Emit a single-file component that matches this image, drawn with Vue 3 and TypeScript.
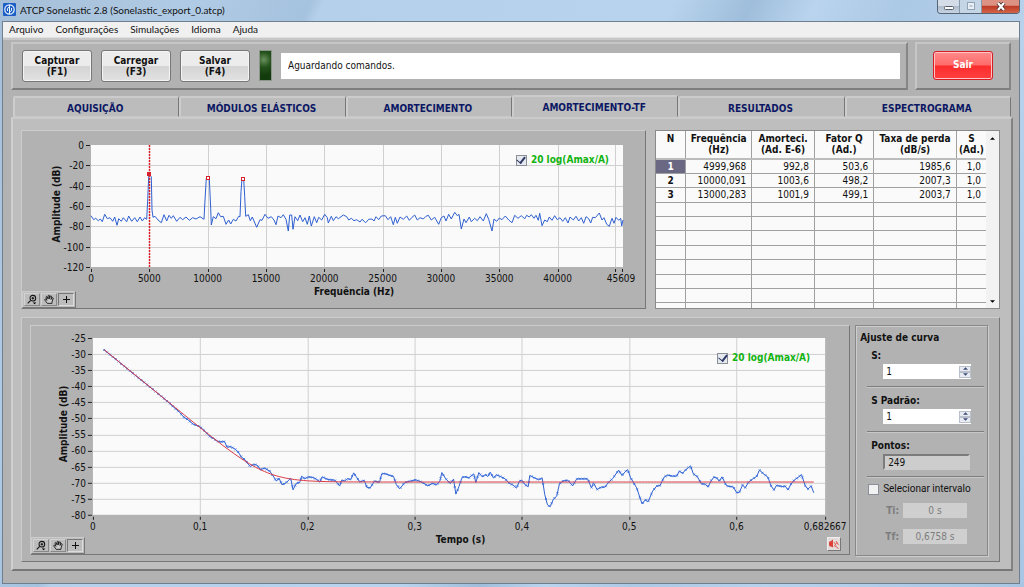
<script setup lang="ts">
import { ref } from 'vue'

interface Tick { pos: number; label: string }

const menus = ['Arquivo', 'Configurações', 'Simulações', 'Idioma', 'Ajuda']
const tabs = ['AQUISIÇÃO', 'MÓDULOS ELÁSTICOS', 'AMORTECIMENTO', 'AMORTECIMENTO-TF', 'RESULTADOS', 'ESPECTROGRAMA']
const activeTab = ref(3)
const actions = [
  { name: 'Capturar', key: '(F1)' },
  { name: 'Carregar', key: '(F3)' },
  { name: 'Salvar', key: '(F4)' },
]

const columns = [
  { id: 'n', top: 'N', sub: '' },
  { id: 'freq', top: 'Frequência', sub: '(Hz)' },
  { id: 'damp', top: 'Amorteci.', sub: '(Ad. E-6)' },
  { id: 'q', top: 'Fator Q', sub: '(Ad.)' },
  { id: 'loss', top: 'Taxa de perda', sub: '(dB/s)' },
  { id: 's', top: 'S', sub: '(Ad.)' },
]
const rows = [
  ['1', '4999,968', '992,8', '503,6', '1985,6', '1,0'],
  ['2', '10000,091', '1003,6', '498,2', '2007,3', '1,0'],
  ['3', '13000,283', '1001,9', '499,1', '2003,7', '1,0'],
]
const emptyRows = 8

const logFreq = ref(true)
const logTime = ref(true)
const sValue = ref('1')
const sDefault = ref('1')
const useInterval = ref(false)

function step(target: 's' | 'd', by: number) {
  const model = target === 's' ? sValue : sDefault
  model.value = String(Math.max(0, Number(model.value) + by))
}

function parse(text: string): [number, number][] {
  return text.trim().split(/\s+/).map((p) => p.split(',').map(Number) as [number, number])
}

function toPath(points: [number, number][]): string {
  return 'M' + points.map(([x, y]) => `${x.toFixed(1)} ${y.toFixed(1)}`).join('L')
}

/* Spectrum plot */
const F = { left: 69, top: 14, width: 532, height: 122, max: 45609 }
const fx = (hz: number) => F.left + (hz / F.max) * F.width
const fy = (db: number) => F.top + (-db / 120) * F.height
const fTicksX: Tick[] = [0, 5000, 10000, 15000, 20000, 25000, 30000, 35000, 40000].map((v) => ({ pos: fx(v), label: String(v) }))
const fTicksY: Tick[] = [0, -20, -40, -60, -80, -100, -120].map((v) => ({ pos: fy(v), label: String(v) }))
const peaks = [{ hz: 5000, db: -29 }, { hz: 10000, db: -32 }, { hz: 13000, db: -33 }]

/* Trace samples are stored in thirds of a plot unit */
const spectrum = parse(`
0,212 8,224 14,220 22,227 28,222 34,230 41,208 49,221 57,218 65,229 71,216 78,241 83,221 91,229 97,218 107,230
113,213 122,229 131,218 139,230 147,216 154,228 161,218 167,223 170,165 173,95 176,90 181,95 183,195 186,217
192,214 201,225 211,233 219,209 227,228 234,211 241,220 247,212 257,229 267,217 275,224 285,216 295,226 305,218
315,222 327,215 339,223 342,165 346,100 350,96 355,100 359,190 361,240 367,215 375,221 382,203 389,215 397,214
405,238 413,225 419,237 427,223 435,228 443,214 447,215 450,140 453,101 458,101 461,155 464,214 472,209 478,227
484,216 497,247 507,224 513,226 522,208 531,220 541,215 549,225 555,239 561,213 570,218 577,209 585,223 592,258
596,210 602,210 606,253 612,215 620,227 627,210 635,230 642,218 649,238 655,213 661,243 670,215 677,233 683,217
692,225 701,208 709,218 712,234 721,214 727,227 735,215 742,221 757,210 767,215 773,225 781,220 789,227 797,224
807,231 813,223 824,233 833,223 843,222 849,228 855,215 863,224 871,213 883,212 891,224 899,215 907,239 913,217
919,235 927,216 937,223 947,213 955,226 963,217 971,210 979,225 987,218 997,222 1005,214 1012,211 1021,225
1031,217 1043,238 1051,218 1059,213 1065,228 1073,208 1081,222 1091,202 1099,212 1104,208 1111,252 1119,222
1125,233 1135,216 1141,230 1151,220 1159,227 1167,215 1177,228 1186,206 1193,223 1203,258 1209,222 1217,229
1225,219 1233,224 1243,213 1253,225 1263,233 1271,211 1281,220 1291,212 1301,221 1307,211 1315,216 1321,209
1329,220 1335,211 1342,226 1346,205 1353,242 1361,225 1369,230 1375,216 1383,226 1391,212 1399,224 1407,218
1415,229 1423,218 1431,234 1437,216 1447,225 1455,214 1463,228 1471,218 1478,235 1485,215 1493,221 1499,234
1505,217 1513,218 1525,204 1533,225 1539,218 1547,238 1555,244 1563,220 1569,235 1575,217 1583,226 1589,220
1592,243 1596,225`)
const spectrumPath = toPath(spectrum.map(([x, y]) => [F.left + x / 3, F.top + y / 3]))

/* Decay plot */
const T = { left: 62, top: 12, width: 733, height: 177, max: 0.682667 }
const tx = (s: number) => T.left + (s / T.max) * T.width
const ty = (db: number) => T.top + ((-25 - db) / 55) * T.height
const tTicksX: Tick[] = [0, 0.1, 0.2, 0.3, 0.4, 0.5, 0.6, 0.682667].map((v) => ({ pos: tx(v), label: String(v).replace('.', ',') }))
const tTicksY: Tick[] = Array.from({ length: 12 }, (_, i) => ({ pos: ty(-25 - i * 5), label: String(-25 - i * 5) }))

const decay = parse(`
34,36 60,57 92,83 121,107 151,131 181,155 221,188 241,206 261,224 273,238 286,246 301,259 321,266 336,280 353,298
363,302 373,310 383,312 395,311 403,328 413,326 426,333 436,342 446,358 458,367 466,379 473,386 483,379 493,382
503,395 516,391 531,400 541,414 551,430 559,421 568,441 581,434 594,421 601,456 611,436 621,434 627,415 636,423
646,417 661,419 673,425 681,433 688,417 706,425 726,427 736,438 741,445 747,427 756,429 766,422 774,426 783,405
793,420 801,432 815,428 823,449 833,450 845,430 861,433 867,408 877,407 889,412 903,416 911,440 921,453 937,434
953,430 969,426 986,432 1006,444 1021,436 1031,442 1042,430 1048,404 1059,422 1073,437 1083,424 1090,469 1099,447
1109,418 1119,417 1129,420 1144,408 1150,434 1159,404 1169,417 1179,410 1186,416 1193,403 1203,421 1211,411
1226,417 1238,423 1251,437 1261,441 1272,451 1281,430 1288,427 1296,439 1307,447 1312,413 1326,420 1339,426
1349,420 1357,470 1365,501 1373,507 1383,484 1393,475 1401,438 1411,430 1426,427 1441,444 1453,423 1486,423
1497,450 1503,435 1514,455 1526,448 1538,448 1549,433 1561,422 1579,397 1589,413 1598,402 1606,395 1615,420
1633,450 1649,498 1659,486 1667,492 1681,460 1693,445 1703,443 1715,418 1726,412 1741,415 1753,415 1761,400
1771,406 1781,395 1795,384 1803,408 1815,416 1827,438 1839,439 1847,448 1857,428 1865,418 1873,420 1881,430
1889,417 1903,444 1913,446 1923,447 1933,464 1941,464 1951,442 1959,450 1969,433 1981,424 1993,416 2002,397
2013,407 2027,418 2037,445 2045,456 2053,443 2071,446 2079,445 2087,456 2097,438 2107,426 2119,418 2128,410
2139,443 2147,454 2157,445 2165,465`).map(([x, y]) => [T.left + x / 3, T.top + y / 3] as [number, number])
const decayPath = toPath(decay)

function sampleAt(x: number): number {
  const i = Math.max(1, decay.findIndex((p) => p[0] >= x))
  const [ax, ay] = decay[i - 1]
  const [bx, by] = decay[i]
  return ay + ((x - ax) / (bx - ax)) * (by - ay)
}
const first = decay[0][0]
const last = decay[decay.length - 1][0]
const marks = Array.from({ length: 249 }, (_, i) => {
  const x = first + ((last - first) * i) / 249
  return `M${(x - 1).toFixed(1)} ${(sampleAt(x) - 1).toFixed(1)}l2 2m0 -2l-2 2`
}).join('')

const fitPath = toPath(Array.from({ length: 240 }, (_, i) => {
  const s = 0.0106 + (0.6614 * i) / 239
  const db = 10 * Math.log10(10 ** (-(25.8 + 272 * s) / 10) + 10 ** -6.98)
  return [tx(s), ty(db)] as [number, number]
}))
</script>

<template>
  <div class="window">
    <header class="titlebar">
      <svg class="app-icon" viewBox="0 0 13 13" aria-hidden="true">
        <rect width="13" height="13" rx="1" fill="#1d5fc4" />
        <circle cx="6.5" cy="6.5" r="4.7" fill="none" stroke="#e8f3ff" stroke-width="1.2" />
        <path d="M6.500 2v9M4.500 8V5.500q0-1 2-1M8.500 5v2.500q0 1-2 1" fill="none" stroke="#e8f3ff" />
      </svg>
      <h1>ATCP Sonelastic 2.8 (Sonelastic_export_0.atcp)</h1>
      <div class="caption">
        <button type="button" aria-label="Minimizar"><svg viewBox="0 0 12 9"><rect x="1.500" y="4.500" width="9" height="3" rx="1" fill="#fff" stroke="#555e6b" /></svg></button>
        <button type="button" aria-label="Maximizar" disabled><svg viewBox="0 0 12 9"><rect x="2.500" y=".5" width="7" height="7" fill="#e8eff6" stroke="#94a3b4" /><path d="M4.500 4h3" stroke="#94a3b4" /></svg></button>
        <button type="button" class="close" aria-label="Fechar"><svg viewBox="0 0 12 9"><path d="M3 1l6 7M9 1L3 8" stroke="#4c3334" stroke-width="4" /><path d="M3 1l6 7M9 1L3 8" stroke="#fff" stroke-width="2.200" /></svg></button>
      </div>
    </header>

    <div class="client">
      <nav class="menubar">
        <button v-for="m in menus" :key="m" type="button">{{ m }}</button>
      </nav>

      <div class="toolbar">
        <section class="raised commands">
          <button v-for="a in actions" :key="a.name" type="button" class="action">{{ a.name }}<br />{{ a.key }}</button>
          <span class="led"></span>
          <input class="status" type="text" readonly value="Aguardando comandos." aria-label="Estado" />
        </section>
        <section class="raised exit">
          <button type="button">Sair</button>
        </section>
      </div>

      <nav class="tabs">
        <button v-for="(t, i) in tabs" :key="t" type="button" :class="{ active: i === activeTab }" @click="activeTab = i">{{ t }}</button>
      </nav>

      <main class="page">
        <div class="upper">
          <section class="raised graph spectrum">
            <svg class="plot" viewBox="0 0 623 177" role="img" aria-label="Espectro">
              <rect class="area" :x="F.left" :y="F.top" :width="F.width" :height="F.height" />
              <g class="grid">
                <path v-for="t in fTicksX.slice(1)" :key="t.label" :d="`M${Math.round(t.pos) + 0.5} ${F.top}v${F.height}`" />
                <path :d="`M${Math.round(fx(45000)) - 0.5} ${F.top}v${F.height}`" />
                <path v-for="t in fTicksY.slice(1, 6)" :key="t.label" :d="`M${F.left} ${Math.round(t.pos) + 0.5}h${F.width}`" />
              </g>
              <g class="ticks">
                <path v-for="t in fTicksX" :key="t.label" :d="`M${Math.round(t.pos) + 0.5} ${F.top + F.height + 2}v3`" />
                <path :d="`M${Math.round(fx(45000)) - 0.5} ${F.top + F.height + 2}v3M${F.left + F.width - 0.5} ${F.top + F.height + 2}v3`" />
                <path v-for="t in fTicksY" :key="t.label" :d="`M${F.left - 5} ${Math.round(t.pos) + 0.5}h4`" />
              </g>
              <text v-for="t in fTicksX" :key="t.label" class="mid" :x="t.pos" y="151">{{ t.label }}</text>
              <text class="mid" x="599" y="151">45609</text>
              <text v-for="t in fTicksY" :key="t.label" class="end" x="62" :y="t.pos + 4">{{ t.label }}</text>
              <text class="mid name" x="332" y="164">Frequência (Hz)</text>
              <text class="mid name" transform="translate(38 73) rotate(-90)">Amplitude (dB)</text>
              <path class="trace" :d="spectrumPath" />
              <path class="cursor" :d="`M${Math.round(fx(5000)) + 0.5} ${F.top}v${F.height}`" />
              <rect v-for="(p, i) in peaks" :key="p.hz" :class="['peak', { solid: i === 0 }]" :x="Math.round(fx(p.hz)) - 1.5" :y="Math.round(fy(p.db)) - 1.5" width="3" height="3" />
            </svg>
            <label class="legend"><input v-model="logFreq" type="checkbox" />20 log(Amax/A)</label>
            <div class="palette">
              <button type="button" aria-label="Zoom"><svg viewBox="0 0 14 12"><circle cx="8" cy="4.500" r="3.300" fill="none" stroke="#111" stroke-width="1.200" /><path d="M6.500 4.500h3M8 3v3M5.500 7L2 10.500" stroke="#111" stroke-width="1.300" /><path d="M8 9.500h4l-2 2z" /></svg></button>
              <button type="button" aria-label="Mover"><svg viewBox="0 0 14 12"><path d="M5 10.500L2 6.500q0-1 1-1l1.500 1.500L3.500 3q.8-1 1.500 0l1 2.500V1.500q.8-1 1.600 0V5l.9-3q1-.8 1.500.2L9.400 6l1.300-2q1-.4 1.300.4L10.500 9v1.500z" fill="#ccc" stroke="#111" /></svg></button>
              <button type="button" class="pressed" aria-label="Cursor"><svg viewBox="0 0 12 11"><path d="M6.500 2v7M3 5.500h7" stroke="#111" /></svg></button>
            </div>
          </section>

          <section class="results">
            <table>
              <colgroup><col v-for="c in columns" :key="c.id" :class="'col-' + c.id" /></colgroup>
              <thead>
                <tr><th v-for="c in columns" :key="c.id" scope="col">{{ c.top }}<br />{{ c.sub }}</th></tr>
              </thead>
              <tbody>
                <tr v-for="(r, i) in rows" :key="r[0]" :class="{ selected: i === 0 }">
                  <td v-for="(cell, j) in r" :key="j">{{ cell }}</td>
                </tr>
                <tr v-for="n in emptyRows" :key="'e' + n" :class="{ cut: n === emptyRows }">
                  <td v-for="c in columns" :key="c.id"></td>
                </tr>
              </tbody>
            </table>
            <div class="scroll">
              <button type="button" aria-label="Subir"><svg viewBox="0 0 6 3"><path d="M0 3l3-3 3 3z" /></svg></button>
              <button type="button" aria-label="Descer"><svg viewBox="0 0 6 3"><path d="M0 0l3 3 3-3z" /></svg></button>
            </div>
          </section>
        </div>

        <div class="raised lower">
          <section class="raised graph decay">
            <svg class="plot" viewBox="0 0 819 228" role="img" aria-label="Decaimento">
              <rect class="area" :x="T.left" :y="T.top" :width="T.width" :height="T.height" />
              <g class="grid">
                <path v-for="t in tTicksX.slice(1, 7)" :key="t.label" :d="`M${Math.round(t.pos) + 0.5} ${T.top}v${T.height}`" />
                <path v-for="t in tTicksY.slice(1, 11)" :key="t.label" :d="`M${T.left} ${Math.round(t.pos) + 0.5}h${T.width}`" />
              </g>
              <g class="ticks">
                <path v-for="t in tTicksX" :key="t.label" :d="`M${Math.round(t.pos) + 0.5} ${T.top + T.height + 2}v3`" />
                <path v-for="t in tTicksY" :key="t.label" :d="`M${T.left - 5} ${Math.round(t.pos) + 0.5}h4`" />
              </g>
              <text v-for="t in tTicksX" :key="t.label" class="mid" :x="t.pos" y="204">{{ t.label }}</text>
              <text v-for="t in tTicksY" :key="t.label" class="end" x="55" :y="t.pos + 4">{{ t.label }}</text>
              <text class="mid name" x="430" y="217">Tempo (s)</text>
              <text class="mid name" transform="translate(36 98) rotate(-90)">Amplitude (dB)</text>
              <path class="trace" :d="decayPath" />
              <path class="marks" :d="marks" />
              <path class="fit" :d="fitPath" />
            </svg>
            <label class="legend"><input v-model="logTime" type="checkbox" />20 log(Amax/A)</label>
            <div class="palette">
              <button type="button" aria-label="Zoom"><svg viewBox="0 0 14 12"><circle cx="8" cy="4.500" r="3.300" fill="none" stroke="#111" stroke-width="1.200" /><path d="M6.500 4.500h3M8 3v3M5.500 7L2 10.500" stroke="#111" stroke-width="1.300" /><path d="M8 9.500h4l-2 2z" /></svg></button>
              <button type="button" aria-label="Mover"><svg viewBox="0 0 14 12"><path d="M5 10.500L2 6.500q0-1 1-1l1.500 1.500L3.500 3q.8-1 1.500 0l1 2.500V1.500q.8-1 1.600 0V5l.9-3q1-.8 1.500.2L9.400 6l1.300-2q1-.4 1.300.4L10.500 9v1.500z" fill="#ccc" stroke="#111" /></svg></button>
              <button type="button" class="pressed" aria-label="Cursor"><svg viewBox="0 0 12 11"><path d="M6.500 2v7M3 5.500h7" stroke="#111" /></svg></button>
            </div>
            <button type="button" class="sound" aria-label="Reproduzir">
              <svg viewBox="0 0 12 12"><path d="M1 5q0-2 2-2l2-1.500v8L3 8.500Q1 8.500 1 7z" fill="#dd4038" /><path d="M6 4l2 3.500M8 3l2.500 4M7 8l3.500 2.500M6 8.500l3-4" fill="none" stroke="#e2605a" /></svg>
            </button>
          </section>

          <section class="fit-panel">
            <h2>Ajuste de curva</h2>
            <div class="block">
              <label for="s-value">S:</label>
              <div class="spin">
                <input id="s-value" v-model="sValue" type="text" />
                <span class="arrows">
                  <button type="button" aria-label="Aumentar S" @click="step('s', 1)"><svg viewBox="0 0 6 3"><path d="M0 3l3-3 3 3z" /></svg></button>
                  <button type="button" aria-label="Diminuir S" @click="step('s', -1)"><svg viewBox="0 0 6 3"><path d="M0 0l3 3 3-3z" /></svg></button>
                </span>
              </div>
            </div>
            <div class="block">
              <label for="s-default">S Padrão:</label>
              <div class="spin">
                <input id="s-default" v-model="sDefault" type="text" />
                <span class="arrows">
                  <button type="button" aria-label="Aumentar S Padrão" @click="step('d', 1)"><svg viewBox="0 0 6 3"><path d="M0 3l3-3 3 3z" /></svg></button>
                  <button type="button" aria-label="Diminuir S Padrão" @click="step('d', -1)"><svg viewBox="0 0 6 3"><path d="M0 0l3 3 3-3z" /></svg></button>
                </span>
              </div>
            </div>
            <div class="block">
              <label for="points">Pontos:</label>
              <input id="points" class="points" type="text" readonly value="249" />
            </div>
            <label class="check"><input v-model="useInterval" type="checkbox" />Selecionar intervalo</label>
            <div class="limit"><label for="ti">Ti:</label><input id="ti" type="text" value="0 s" :disabled="!useInterval" /></div>
            <div class="limit"><label for="tf">Tf:</label><input id="tf" type="text" value="0,6758 s" :disabled="!useInterval" /></div>
          </section>
        </div>
      </main>
    </div>
  </div>
</template>

<style>
body {
  background: #b5cfea;
}
</style>

<style scoped>
.window {
  box-sizing: border-box;
  min-height: 100vh;
  padding: 0 4px 3px 2px;
  display: flex;
  flex-direction: column;
  font: 10px/12px "DejaVu Sans Condensed", "Noto Sans", sans-serif;
  color: #111;
  background: linear-gradient(115deg, #a6bfd8 0, #b0cbe5 15%, #a5c2de 24%, #b5d0ea 25%, #b8d3ed 52%, #9fbedb 58%, #bad4ee 63%, #abc8e4 70%, #b8d2ec 80%, #a8c6e3 100%);
}
.window * {
  box-sizing: border-box;
}
button,
input {
  font: inherit;
  color: inherit;
  margin: 0;
  padding: 0;
  border: 0;
  border-radius: 0;
}
svg {
  display: block;
}

.titlebar {
  height: 21px;
  display: flex;
  align-items: center;
  gap: 4px;
  padding: 0 0 2px 1px;
}
.app-icon {
  width: 13px;
  height: 13px;
}
h1 {
  flex: 1;
  margin: 0;
  font: 10px/14px Lato, "Noto Sans", sans-serif;
}
.caption {
  align-self: flex-start;
  display: flex;
  height: 14px;
  border: 1px solid #566575;
  border-top: 0;
  border-radius: 0 0 4px 4px;
  overflow: hidden;
}
.caption button {
  width: 22px;
  display: grid;
  place-items: center;
  border-right: 1px solid #8798a9;
  background: linear-gradient(#d4dde7 0 50%, #aebccb 50%, #c5d3e2);
}
.caption button:disabled {
  background: #c4d5e6;
}
.caption .close {
  width: 37px;
  border-right: 0;
  background: linear-gradient(#dc9182 0 40%, #be3c25 50%, #d4664a);
}
.caption svg {
  width: 12px;
  height: 9px;
}

.client {
  flex: 1;
  display: flex;
  flex-direction: column;
  border: 1px solid #6f7f90;
  background: #b2b2b2;
}
.menubar {
  height: 16px;
  display: flex;
  gap: 12px;
  padding: 0 6px 1px;
  background: #f0f0f0;
  border-bottom: 1px solid #e0e0e0;
}
.menubar button {
  background: none;
  font-family: Lato, "Noto Sans", sans-serif;
}

.raised {
  border: 1px solid;
  border-color: #cdcdcd #777 #777 #cacaca;
  background: #b2b2b2;
}
.toolbar {
  display: flex;
  gap: 7px;
  padding: 2px 8px 5px;
  border-top: 2px solid #c8c8c8;
}
.toolbar .raised {
  height: 48px;
  border-width: 2px;
  border-color: #c6c6c6 #868686 #7e7e7e #c6c6c6;
}
.commands {
  flex: 1;
  display: flex;
  align-items: center;
  gap: 9px;
  padding: 0 6px 1px 9px;
}
.action {
  width: 70px;
  height: 32px;
  border: 1px solid #777;
  border-radius: 3px;
  background: linear-gradient(#ececec 0 48%, #d4d4d4 52%, #e2e2e2);
  box-shadow: inset 0 0 0 1px #f4f4f4;
  font-weight: bold;
  line-height: 11px;
}
.led {
  width: 13px;
  height: 31px;
  border: 1px solid #8d968a;
  background: radial-gradient(circle at 35% 30%, #69905c, #24521b 35%, #123a0c 75%);
}
.status {
  flex: 1;
  min-width: 0;
  height: 26px;
  padding: 0 7px;
  background: #fff;
}
.exit {
  width: 96px;
  display: grid;
  place-items: center;
  padding-bottom: 2px;
}
.exit button {
  width: 60px;
  height: 29px;
  border: 1px solid #d81c24;
  border-radius: 3px;
  box-shadow: inset 0 0 0 1px #ffc4c4;
  background: linear-gradient(#ff8b8b, #ff6a6a 48%, #fb2c2c 52%, #ff4040);
  color: #fff;
  font-weight: bold;
}

.tabs {
  display: flex;
  align-items: flex-end;
  height: 22px;
  padding: 0 8px 0 10px;
}
.tabs button {
  flex: 1;
  height: 21px;
  padding: 3px 3px 0 0;
  border: 2px solid;
  border-color: #cbcbcb #777 #c8c8c8 #cdcdcd;
  border-right-width: 1px;
  border-bottom-width: 1px;
  border-radius: 2px 2px 0 0;
  background: #bcbcbc;
  color: #0c1864;
  font-weight: bold;
}
.tabs .active {
  height: 22px;
  border-bottom-color: #bebebe;
  background: #bebebe;
}

.page {
  flex: 1;
  display: flex;
  flex-direction: column;
  gap: 8px;
  margin: 0 6px 12px 8px;
  padding: 11px 11px 7px 8px;
  border: 2px solid;
  border-color: #cbcbcb #828282 #777 #cfcfcf;
  background: #bebebe;
}
.upper {
  display: grid;
  grid-template-columns: minmax(0, 625fr) minmax(0, 345fr);
  align-items: start;
  gap: 9px;
}
.graph {
  position: relative;
  min-width: 0;
}
.plot {
  width: 100%;
  height: auto;
}
.plot text {
  font-size: 10px;
  fill: #111;
}
.plot .mid {
  text-anchor: middle;
}
.plot .end {
  text-anchor: end;
}
.plot .name {
  font-weight: bold;
}
.area {
  fill: #fafafa;
}
.grid path {
  stroke: #d0d0d0;
}
.ticks path {
  stroke: #222;
}
.trace {
  fill: none;
  stroke: #2f60d0;
  stroke-linejoin: round;
}
.marks {
  stroke: #3a6ee0;
  stroke-width: 0.8;
}
.fit {
  fill: none;
  stroke: #dc3a45;
}
.cursor {
  stroke: #e01c26;
  stroke-width: 1.5;
  stroke-dasharray: 2 1;
}
.peak {
  fill: #fff;
  stroke: #d8202c;
}
.peak.solid {
  fill: #d8202c;
}

.legend {
  position: absolute;
  top: 23px;
  right: 36px;
  display: flex;
  align-items: center;
  gap: 4px;
  color: #11b411;
  font-weight: bold;
}
.decay .legend {
  top: 26px;
  right: 39px;
}
input[type="checkbox"] {
  appearance: none;
  display: grid;
  place-items: center;
  width: 11px;
  height: 11px;
  border: 1px solid #8a8f98;
  background: #e6e9ee;
}
input[type="checkbox"]:checked::before {
  content: "";
  width: 4px;
  height: 7px;
  margin-top: -2px;
  border: solid #2c3866;
  border-width: 0 2px 1px 0;
  transform: rotate(38deg);
}
.palette {
  position: absolute;
  left: 0;
  bottom: 0;
  display: flex;
  gap: 1px;
  padding: 1px;
  border: 1px solid;
  border-color: #ccc #777 #777 #ccc;
  background: #bdbdbd;
}
.palette button {
  width: 16px;
  height: 13px;
  padding: 0 1px;
  border: 1px solid;
  border-color: #d2d2d2 #888 #888 #d2d2d2;
  background: #bcbcbc;
}
.palette .pressed {
  border-color: #777 #ddd #ddd #777;
}
.palette svg {
  width: 12px;
  height: 11px;
}
.sound {
  position: absolute;
  right: 8px;
  bottom: 3px;
  width: 14px;
  height: 14px;
  border: 1px solid;
  border-color: #eee #777 #777 #eee;
  background: #e3dcda;
}

.results {
  align-self: stretch;
  display: flex;
  min-width: 0;
  border: 1px solid #8a8a8a;
  background: #fafafa;
}
table {
  flex: 1;
  min-width: 0;
  height: 100%;
  table-layout: fixed;
  border-collapse: collapse;
}
.col-n { width: 28px; }
.col-freq { width: 20%; }
.col-damp { width: 19%; }
.col-q { width: 18%; }
.col-loss { width: 25%; }
.col-s { width: 9%; }
th,
td {
  padding: 0 5px 0 0;
  border-right: 1px solid #a0a0a0;
  border-bottom: 1px solid #a0a0a0;
  text-align: right;
  line-height: 11px;
  height: 14px;
}
th {
  padding: 2px 0 0;
  height: 28px;
  text-align: center;
  vertical-align: top;
  white-space: nowrap;
  border-bottom: 2px solid #bcbcbc;
}
td:first-child {
  padding: 0;
  text-align: center;
  font-weight: bold;
}
th:last-child,
td:last-child {
  border-right: 0;
}
.cut td {
  height: 5px;
  border-bottom: 0;
}
.selected td:first-child {
  background: #6b6883;
  color: #fff;
}
.scroll {
  width: 13px;
  display: flex;
  flex-direction: column;
  justify-content: space-between;
  background: #f2f2f2;
}
.scroll button {
  height: 14px;
  display: grid;
  place-items: center;
  background: none;
}
.scroll svg,
.arrows svg {
  width: 5px;
  height: 3px;
}

.lower {
  flex: 1;
  display: grid;
  grid-template-columns: minmax(0, 821fr) minmax(0, 133fr);
  align-items: start;
  gap: 5px;
  padding: 7px 11px 5px 8px;
}
.fit-panel {
  align-self: stretch;
  display: flex;
  flex-direction: column;
  padding: 5px 3px 0 4px;
  border: 1px solid #888;
  box-shadow: inset 1px 1px #cdcdcd, 1px 1px #cdcdcd;
}
h2 {
  margin: 0;
  font-size: 10px;
  line-height: 14px;
}
.block {
  height: 45px;
  margin-left: 7px;
  padding: 8px 0 0 4px;
  border-bottom: 1px solid #7e7e7e;
  box-shadow: 0 1px #c8c8c8;
}
.block:first-of-type {
  height: 42px;
  padding-top: 5px;
}
.block label {
  display: block;
  font-weight: bold;
  line-height: 12px;
}
.spin {
  display: flex;
  align-items: center;
  height: 15px;
  margin: 2px 13px 0 12px;
  background: #fff;
}
.spin input {
  flex: 1;
  min-width: 0;
  height: 15px;
  padding: 0 3px;
  background: none;
}
.arrows {
  display: flex;
  flex-direction: column;
  width: 12px;
}
.arrows button {
  height: 6px;
  display: grid;
  place-items: center;
  border: 1px solid #b9c0cc;
  background: #e8ebf1;
  fill: #3e4c78;
}
.points {
  display: block;
  width: calc(100% - 26px);
  height: 16px;
  margin: 2px 0 0 12px;
  padding: 0 3px;
  border: 2px solid;
  border-color: #7c7c7c #cdcdcd #cdcdcd #7c7c7c;
  background: #cdcdcd;
}
.check {
  display: flex;
  align-items: center;
  gap: 4px;
  margin: 6px 0 8px 8px;
  white-space: nowrap;
  font-family: Roboto, "Noto Sans", sans-serif;
}
.check input {
  background: #f2f2f2;
}
.limit {
  display: flex;
  align-items: center;
  justify-content: flex-end;
  gap: 4px;
  margin: 0 17px 11px 0;
  color: #7d7d7d;
}
.limit label {
  font-weight: bold;
}
.limit input {
  width: 64px;
  height: 15px;
  text-align: center;
  background: #cfcfcf;
}
</style>
